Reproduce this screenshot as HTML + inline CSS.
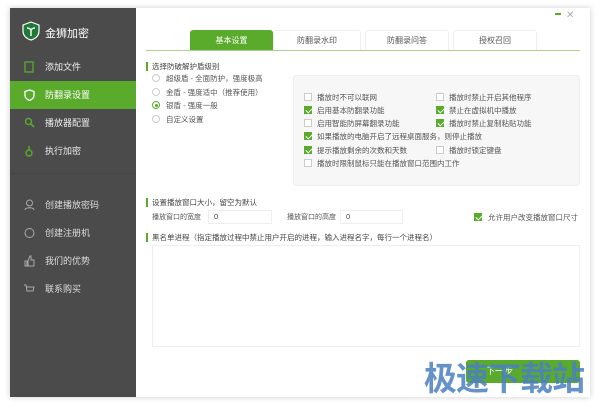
<!DOCTYPE html>
<html><head><meta charset="utf-8"><style>
*{margin:0;padding:0;box-sizing:border-box}
body{width:600px;height:408px;background:#fff;font-family:"Liberation Sans","Noto Sans CJK SC",sans-serif;font-size:8px;color:#444;position:relative;overflow:hidden}
.win{position:absolute;left:10px;top:8px;width:580px;height:389px;background:#fff;box-shadow:0 0 6px rgba(0,0,0,.2)}
.side{position:absolute;left:10px;top:8px;width:126px;height:389px;background:#4b4b4b;color:#eee}
.abs{position:absolute}
.mi{position:absolute;left:0;width:126px;height:28px;line-height:28px;padding-left:35px;font-size:9px;color:#eee}
.mi.on{background:#5aab2c;color:#fff}
.ic{position:absolute;left:14px;top:8px;width:11px;height:12px}
.tab{position:absolute;top:30px;height:20px;line-height:20px;text-align:center;font-size:8px;color:#555;border:1px solid #eee;border-bottom:none;border-radius:3px 3px 0 0}
.lbl{position:absolute;font-size:7.5px;color:#444;border-left:2px solid #5aab2c;padding-left:4px;line-height:9px}
.r{position:absolute;width:8px;height:8px;border:1px solid #ccc;border-radius:50%}
.rt{position:absolute;font-size:7.5px;color:#555}
.cb{position:absolute;width:8px;height:8px;border:1px solid #ccc;background:#fff}
.cb.k{background:#5aab2c;border-color:#5aab2c}
.cb.k:after{content:"";position:absolute;left:1.5px;top:0;width:3px;height:5px;border:solid #fff;border-width:0 1.2px 1.2px 0;transform:rotate(45deg)}
.inp{position:absolute;height:14px;border:1px solid #eee;font-size:7.5px;line-height:12px;padding-left:5px}
</style></head><body>
<div class="win"></div>
<div class="side">
 <svg class="abs" style="left:12px;top:13px" width="18" height="20" viewBox="0 0 18 20"><path d="M9 1L17 4V10C17 15 13 18 9 19C5 18 1 15 1 10V4Z" fill="#1f7a3a" stroke="#fff" stroke-width="1.2"/><path d="M9 8V15M5 7C7 7 9 8 9 10C9 8 11 7 13 7" stroke="#fff" stroke-width="1.4" fill="none"/></svg>
 <div class="abs" style="left:35px;top:17px;font-size:11px;color:#fff">金狮加密</div>
 <div class="mi" style="top:45px"><svg class="ic" viewBox="0 0 11 12"><rect x="1" y="1" width="8" height="10" fill="none" stroke="#5aab2c" stroke-width="1.3"/></svg>添加文件</div>
 <div class="mi on" style="top:73px"><svg class="ic" viewBox="0 0 11 12"><path d="M5.5 1L10 2.5V6C10 9 8 10.5 5.5 11.5C3 10.5 1 9 1 6V2.5Z" fill="none" stroke="#fff" stroke-width="1.3"/></svg>防翻录设置</div>
 <div class="mi" style="top:101px"><svg class="ic" viewBox="0 0 11 12"><circle cx="4.5" cy="4.5" r="3" fill="none" stroke="#5aab2c" stroke-width="1.4"/><path d="M7 7L10 10" stroke="#5aab2c" stroke-width="1.6"/></svg>播放器配置</div>
 <div class="mi" style="top:129px"><svg class="ic" viewBox="0 0 11 12"><circle cx="5" cy="8" r="3" fill="none" stroke="#5aab2c" stroke-width="1.4"/><path d="M5 5V1" stroke="#5aab2c" stroke-width="1.4"/></svg>执行加密</div>
 <div class="abs" style="left:0;top:165px;width:126px;height:1px;background:#444"></div>
 <div class="mi" style="top:183px;color:#ddd"><svg class="ic" viewBox="0 0 11 12"><circle cx="5.5" cy="4" r="3" fill="none" stroke="#aaa"/><path d="M1 11C1 8 10 8 10 11" fill="none" stroke="#aaa"/></svg>创建播放密码</div>
 <div class="mi" style="top:211px;color:#ddd"><svg class="ic" viewBox="0 0 11 12"><circle cx="5.5" cy="6" r="4.5" fill="none" stroke="#aaa"/></svg>创建注册机</div>
 <div class="mi" style="top:239px;color:#ddd"><svg class="ic" viewBox="0 0 11 12"><path d="M1 6H3V11H1ZM4 6L6 1H7V5H10V11H4Z" fill="none" stroke="#aaa"/></svg>我们的优势</div>
 <div class="mi" style="top:267px;color:#ddd"><svg class="ic" viewBox="0 0 11 12"><path d="M0 2H2L3 8H9L10 4H2.5" fill="none" stroke="#aaa"/></svg>联系购买</div>
</div>
<div class="abs" style="left:555px;top:13px;width:6px;height:2px;background:#5aab2c"></div>
<div class="abs" style="left:566px;top:10px;font-size:10px;color:#aaa">✕</div>
<div class="tab" style="left:190px;width:83px;background:#5aab2c;color:#fff;border-color:#5aab2c">基本设置</div>
<div class="tab" style="left:273px;width:88px">防翻录水印</div>
<div class="tab" style="left:365px;width:84px">防翻录问答</div>
<div class="tab" style="left:453px;width:84px">授权召回</div>
<div class="abs" style="left:146px;top:50px;width:434px;height:1px;background:#a8d38a"></div>
<div class="lbl" style="left:146px;top:62px">选择防破解护盾级别</div>
<div class="r" style="left:152px;top:74px"></div><div class="rt" style="left:166px;top:73px">超级盾 - 全面防护，强度极高</div>
<div class="r" style="left:152px;top:88px"></div><div class="rt" style="left:166px;top:87px">金盾 - 强度适中（推荐使用）</div>
<div class="r" style="left:152px;top:101px;border-color:#5aab2c"><div style="position:absolute;left:1.5px;top:1.5px;width:3px;height:3px;border-radius:50%;background:#5aab2c"></div></div><div class="rt" style="left:166px;top:100px">银盾 - 强度一般</div>
<div class="r" style="left:152px;top:115px"></div><div class="rt" style="left:166px;top:114px">自定义设置</div>
<div class="abs" style="left:293px;top:75px;width:287px;height:111px;background:#f7f7f7;border:1px solid #eee;border-radius:3px"></div>
<div class="cb" style="left:304px;top:93px"></div><div class="rt" style="left:317px;top:92px">播放时不可以联网</div>
<div class="cb" style="left:436px;top:93px"></div><div class="rt" style="left:449px;top:92px">播放时禁止开启其他程序</div>
<div class="cb k" style="left:304px;top:106px"></div><div class="rt" style="left:317px;top:105px">启用基本防翻录功能</div>
<div class="cb k" style="left:436px;top:106px"></div><div class="rt" style="left:449px;top:105px">禁止在虚拟机中播放</div>
<div class="cb" style="left:304px;top:119px"></div><div class="rt" style="left:317px;top:118px">启用智能防屏幕翻录功能</div>
<div class="cb k" style="left:436px;top:119px"></div><div class="rt" style="left:449px;top:118px">播放时禁止复制粘贴功能</div>
<div class="cb k" style="left:304px;top:132px"></div><div class="rt" style="left:317px;top:131px">如果播放的电脑开启了远程桌面服务，则停止播放</div>
<div class="cb k" style="left:304px;top:146px"></div><div class="rt" style="left:317px;top:145px">提示播放剩余的次数和天数</div>
<div class="cb" style="left:436px;top:146px"></div><div class="rt" style="left:449px;top:145px">播放时锁定键盘</div>
<div class="cb" style="left:304px;top:159px"></div><div class="rt" style="left:317px;top:158px">播放时限制鼠标只能在播放窗口范围内工作</div>
<div class="lbl" style="left:146px;top:198px">设置播放窗口大小，留空为默认</div>
<div class="rt" style="left:152px;top:212px;font-size:7px">播放窗口的宽度</div>
<div class="inp" style="left:208px;top:210px;width:64px">0</div>
<div class="rt" style="left:287px;top:212px;font-size:7px">播放窗口的高度</div>
<div class="inp" style="left:340px;top:210px;width:63px">0</div>
<div class="cb k" style="left:474px;top:213px"></div><div class="rt" style="left:488px;top:212px">允许用户改变播放窗口尺寸</div>
<div class="lbl" style="left:146px;top:233px">黑名单进程（指定播放过程中禁止用户开启的进程，输入进程名字，每行一个进程名）</div>
<div class="abs" style="left:152px;top:245px;width:428px;height:102px;border:1px solid #eee"></div>
<div class="abs" style="left:466px;top:360px;width:114px;height:23px;background:#5aab2c;border-radius:3px;color:#fff;font-size:9px;line-height:23px;padding-left:20px">下一步</div>
<div class="abs" style="left:424px;top:360px;font-size:33px;font-weight:bold;color:#4a80c0;letter-spacing:-1px;line-height:38px;opacity:.85">极速下载站</div>
</body></html>
